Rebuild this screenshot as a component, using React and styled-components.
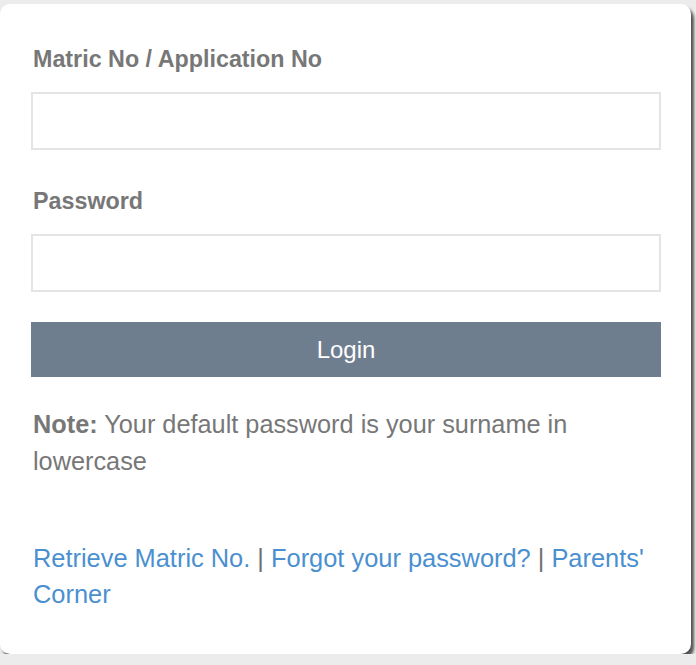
import React from 'react';
import styled, { createGlobalStyle } from 'styled-components';

const GlobalStyle = createGlobalStyle`
  html, body {
    margin: 0;
    padding: 0;
    background: #ececec;
  }
  body {
    font-family: 'Liberation Sans', Arial, Helvetica, sans-serif;
  }
`;

const Card = styled.div`
  box-sizing: border-box;
  margin-top: 4px;
  width: 691px;
  height: 650px;
  padding: 42px 30px 0 31px;
  background: #fff;
  border-radius: 10px;
  box-shadow: 3px 4px 3px rgba(0, 0, 0, 0.65);
`;

const Label = styled.label`
  display: block;
  margin: ${(p) => (p.$first ? '0' : '38px')} 0 20px 2px;
  font-size: 23.3px;
  line-height: 26px;
  font-weight: bold;
  color: #777;
`;

const Input = styled.input`
  display: block;
  box-sizing: border-box;
  width: 630px;
  height: 58px;
  margin: 0;
  padding: 0 14px;
  border: 2px solid #e4e4e4;
  border-radius: 0;
  background: #fff;
  font-family: inherit;
  font-size: 22px;
  color: #555;
  outline: none;
`;

const LoginButton = styled.button`
  display: block;
  width: 630px;
  height: 55px;
  margin-top: 30px;
  padding: 0;
  border: none;
  background: #6f7e8f;
  color: #fff;
  font-family: inherit;
  font-size: 24px;
  cursor: pointer;
`;

const Note = styled.p`
  margin: 29px 0 0 2px;
  font-size: 25.3px;
  line-height: 37px;
  color: #777;
  b {
    font-weight: bold;
  }
`;

const Links = styled.div`
  margin: 60px 0 0 2px;
  font-size: 25.4px;
  line-height: 36px;
`;

const Link = styled.a`
  color: #4a90d0;
  text-decoration: none;
`;

const Sep = styled.span`
  color: #707070;
`;

export default function App() {
  return (
    <>
      <GlobalStyle />
      <Card>
        <Label $first htmlFor="matric">Matric No / Application No</Label>
        <Input id="matric" type="text" />
        <Label htmlFor="password">Password</Label>
        <Input id="password" type="password" />
        <LoginButton type="button">Login</LoginButton>
        <Note>
          <b>Note:</b> Your default password is your surname in lowercase
        </Note>
        <Links>
          <Link href="#">Retrieve Matric No.</Link> <Sep>|</Sep>{' '}
          <Link href="#">Forgot your password?</Link> <Sep>|</Sep>{' '}
          <Link href="#">Parents' Corner</Link>
        </Links>
      </Card>
    </>
  );
}
